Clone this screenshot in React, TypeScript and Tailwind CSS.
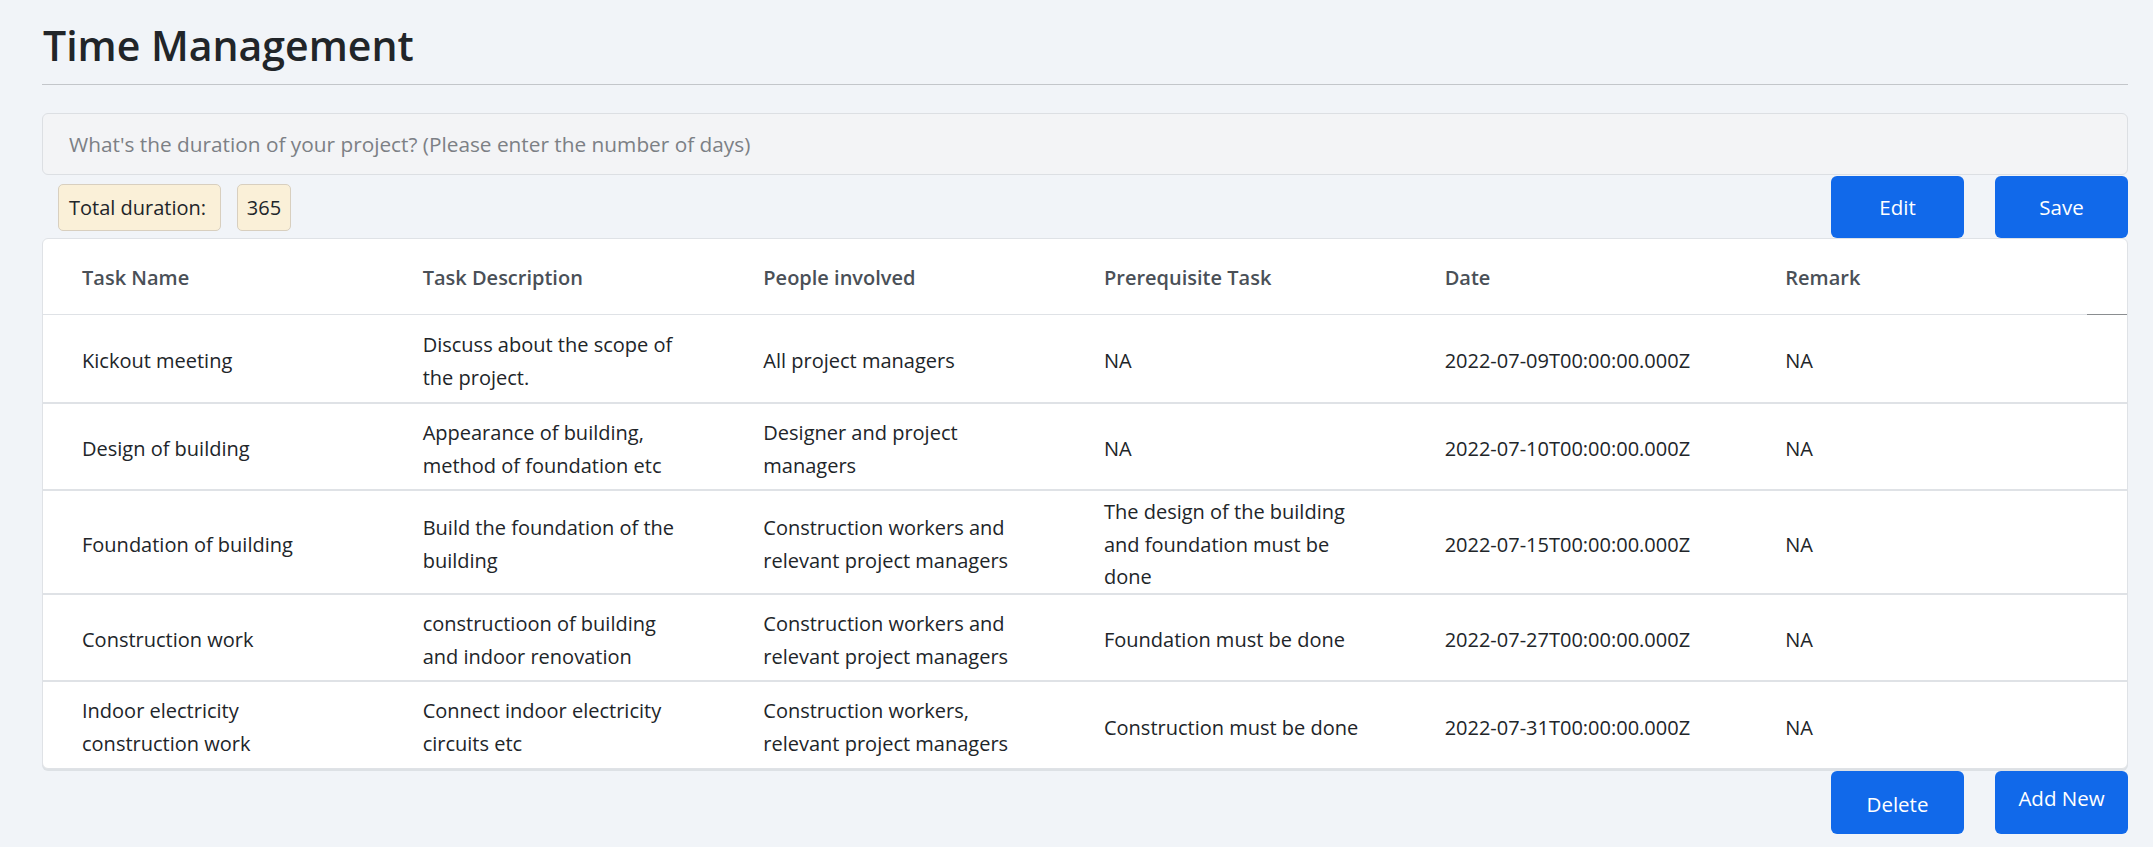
import React from "react";

const rows: string[][] = [
  ["Kickout meeting", "Discuss about the scope of the project.", "All project managers", "NA", "2022-07-09T00:00:00.000Z", "NA"],
  ["Design of building", "Appearance of building, method of foundation etc", "Designer and project managers", "NA", "2022-07-10T00:00:00.000Z", "NA"],
  ["Foundation of building", "Build the foundation of the building", "Construction workers and relevant project managers", "The design of the building and foundation must be done", "2022-07-15T00:00:00.000Z", "NA"],
  ["Construction work", "constructioon of building and indoor renovation", "Construction workers and relevant project managers", "Foundation must be done", "2022-07-27T00:00:00.000Z", "NA"],
  ["Indoor electricity construction work", "Connect indoor electricity circuits etc", "Construction workers, relevant project managers", "Construction must be done", "2022-07-31T00:00:00.000Z", "NA"],
];

const headers = ["Task Name", "Task Description", "People involved", "Prerequisite Task", "Date", "Remark"];

export default function App() {
  return (
    <div className="min-h-screen bg-[#f1f4f8] pl-[42px] pr-[25px] font-['Open_Sans','Noto_Sans',sans-serif] text-[#212529]">
      <h1 className="h-[84px] pl-px pt-[15px] text-[41px] font-semibold leading-[60px] text-[#212529]">
        Time Management
      </h1>
      <hr className="border-0 border-t border-[#c3c6ca]" />

      <div className="mt-[28px]">
        <input
          className="h-[62px] w-full rounded-[6px] border border-[#dcdfe3] bg-[#f3f4f6] px-[26px] text-[20.8px] text-[#212529] outline-none placeholder:text-[#7c8085]"
          placeholder="What's the duration of your project? (Please enter the number of days)"
        />
      </div>

      <div className="flex h-[63px] items-start justify-between">
        <div className="mt-[9px] ml-[16px] flex gap-[16px]">
          <span className="flex h-[47px] w-[163px] items-center rounded-[5px] border border-[#d8cfbf] bg-[#faf0d8] pl-[10px] text-[20px]">
            Total duration:
          </span>
          <span className="flex h-[47px] w-[54px] items-center justify-center rounded-[5px] border border-[#d8cfbf] bg-[#faf0d8] text-[20px]">
            365
          </span>
        </div>
        <div className="mt-px flex gap-[31px]">
          <button className="flex h-[62px] w-[133px] items-center justify-center rounded-[6px] bg-[#1169ea] text-[20.5px] text-white">
            Edit
          </button>
          <button className="flex h-[62px] w-[133px] items-center justify-center rounded-[6px] bg-[#1169ea] text-[20.5px] text-white">
            Save
          </button>
        </div>
      </div>

      <div className="overflow-hidden rounded-[6px] border border-[#dfe2e6] bg-white text-[20px] leading-[32.7px] shadow-[0_2px_0_#dde1e5]">
        <div className="grid grid-cols-[repeat(6,340.67px)_1fr]">
          {headers.map((h) => (
            <div key={h} className="flex h-[76px] items-center border-b border-[#dfe2e6] pl-[39px] font-semibold text-[#4a5057]">
              <span className="translate-y-[2px]">{h}</span>
            </div>
          ))}
          <div className="h-[76px] border-b border-[#8a8d90]" />
        </div>
        {rows.map((r, i) => (
          <div
            key={i}
            className={
              i === 0
                ? "grid min-h-[87px] grid-cols-[repeat(6,340.67px)_1fr]"
                : i === rows.length - 1
                ? "grid min-h-[88px] grid-cols-[repeat(6,340.67px)_1fr] border-t-2 border-[#dfe2e6]"
                : "grid min-h-[87px] grid-cols-[repeat(6,340.67px)_1fr] border-t-2 border-[#dfe2e6]"
            }
          >
            {r.map((c, j) => (
              <div key={j} className="flex items-center py-[2px] pr-[40px] pl-[39px]">
                <span className="translate-y-[3px]">{c}</span>
              </div>
            ))}
            <div />
          </div>
        ))}
      </div>

      <div className="mt-[2px] flex justify-end gap-[31px]">
        <button className="flex h-[63px] w-[133px] items-center justify-center rounded-[6px] bg-[#1169ea] pt-[4px] text-[20.5px] text-white">
          Delete
        </button>
        <button className="flex h-[63px] w-[133px] items-center justify-center rounded-[6px] bg-[#1169ea] pb-[9px] text-[20.5px] text-white">
          Add New
        </button>
      </div>
    </div>
  );
}
